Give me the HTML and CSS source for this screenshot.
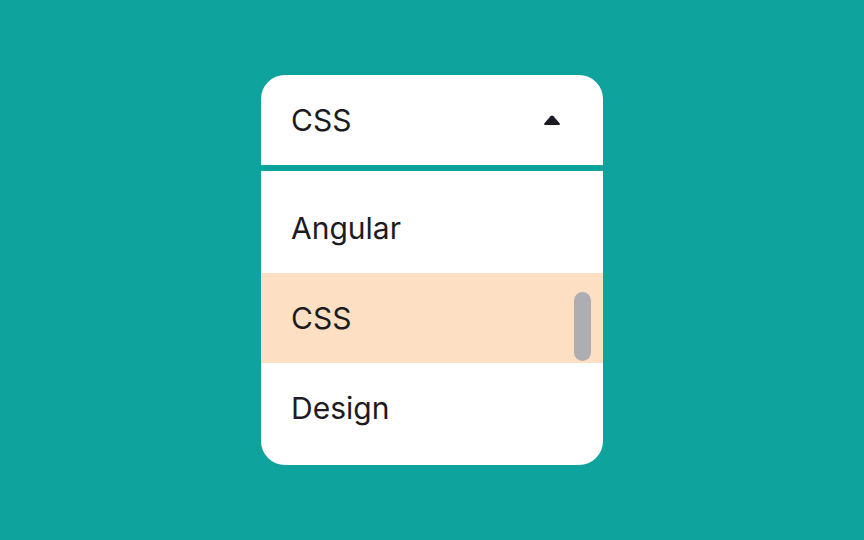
FILE: index.html
```html
<!DOCTYPE html>
<html lang="en">
<head>
    <meta charset="UTF-8">
    <meta name="viewport" content="width=device-width, initial-scale=1.0">
    <title>Select</title>
    <link rel="stylesheet" href="styles.css">
</head>
<body>
    <div class="select">
        <div class="select-head">
            <span>CSS</span>
            <svg class="caret" width="18" height="11" viewBox="0 0 18 11">
                <path d="M7.5 1.3 Q9 -0.1 10.5 1.3 L16.6 8.2 Q17.6 10 15.6 10 L2.4 10 Q0.4 10 1.4 8.2 Z" fill="#1c1b22"/>
            </svg>
        </div>
        <div class="options">
            <div class="option">Angular</div>
            <div class="option selected">CSS</div>
            <div class="option">Design</div>
            <div class="scroll-thumb"></div>
        </div>
    </div>
</body>
</html>
```

FILE: styles.css
```css
html, body {
    margin: 0;
    height: 100%;
}
body {
    background-color: #0fa39d;
    display: flex;
    align-items: center;
    justify-content: center;
    font-family: Inter, "Noto Sans", sans-serif;
    color: #1c1b22;
}
.select {
    width: 342px;
    background-color: white;
    border-radius: 24px;
    overflow: hidden;
}
.select-head {
    height: 90px;
    display: flex;
    align-items: center;
    justify-content: space-between;
    padding: 0 42px 0 30px;
    border-bottom: 6px solid #0fa39d;
    font-size: 30px;
}
.caret {
    display: block;
}
.options {
    position: relative;
    padding: 12px 0;
}
.option {
    height: 90px;
    display: flex;
    align-items: center;
    padding-left: 30px;
    font-size: 30px;
}
.option.selected {
    background-color: #fde0c4;
}
.scroll-thumb {
    position: absolute;
    top: 121px;
    right: 12px;
    width: 17px;
    height: 69px;
    border-radius: 9px;
    background-color: #aeaeb2;
}
```
